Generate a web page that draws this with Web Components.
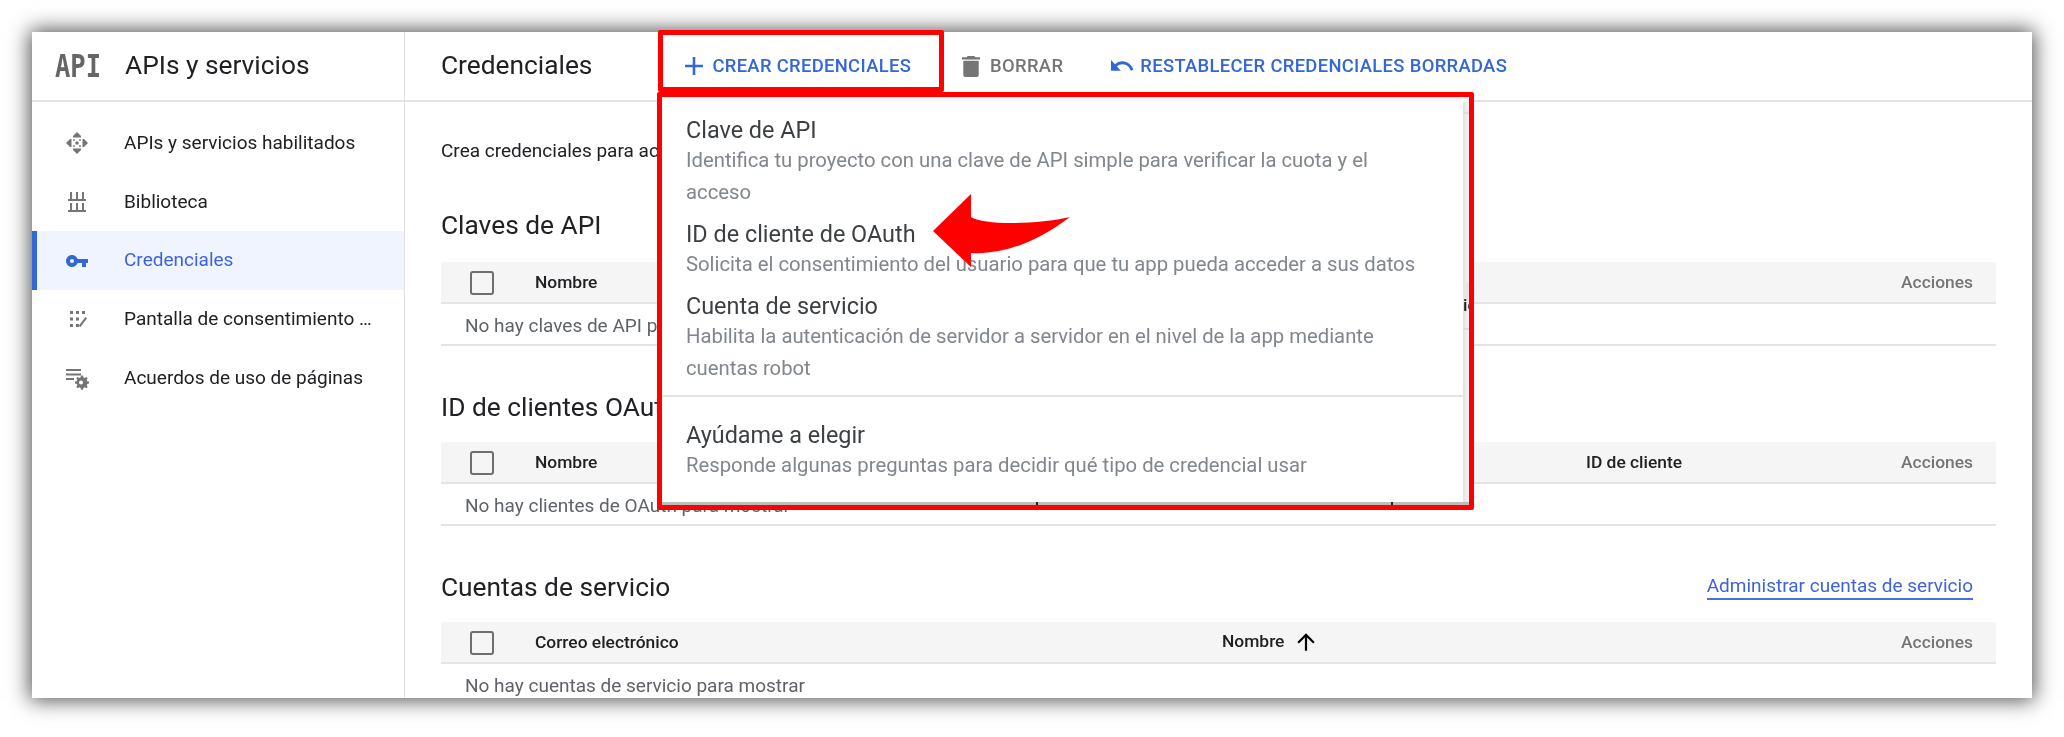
<!DOCTYPE html>
<html lang="es">
<head>
<meta charset="utf-8">
<title>Credenciales</title>
<style>
    html, body { margin: 0; background: white; }
    body {
        height: 737px;
        overflow: hidden;
        box-sizing: border-box;
        padding: 32px 32px 39px 32px;
        font-family: Roboto, "Liberation Sans", sans-serif;
        color: #202124;
    }
</style>
</head>
<body>
<gcp-window>
    <gcp-sidebar slot="sidebar" title-text="APIs y servicios">
        <nav-item label="APIs y servicios habilitados">
            <svg viewBox="0 0 24 24" width="24" height="24" fill="#757575"><path d="M12 1l4 4v1.500h-8V5zM12 23l-4-4v-1.500h8V19zM1 12l4-4h1.500v8H5zM23 12l-4 4h-1.500V8H19z"/><circle cx="12" cy="12" r="1.800"/><circle cx="9" cy="9" r=".9"/><circle cx="15" cy="9" r=".9"/><circle cx="9" cy="15" r=".9"/><circle cx="15" cy="15" r=".9"/></svg>
        </nav-item>
        <nav-item label="Biblioteca">
            <svg viewBox="0 0 24 24" width="24" height="24" fill="#757575"><path d="M5 2h2v7H5zM11 2h2v7h-2zM17 2h2v7h-2zM3 9h18v2H3zM5 13h2v7H5zM11 13h2v7h-2zM17 13h2v7h-2zM3 20h18v2H3z"/></svg>
        </nav-item>
        <nav-item label="Credenciales" active>
            <svg viewBox="0 0 24 24" width="24" height="24" fill="#3367d6"><path d="M12.650 10C11.830 7.670 9.610 6 7 6c-3.310 0-6 2.690-6 6s2.690 6 6 6c2.610 0 4.830-1.670 5.650-4H17v4h4v-4h2v-4H12.650zM7 14c-1.100 0-2-.9-2-2s.9-2 2-2 2 .9 2 2-.9 2-2 2z"/></svg>
        </nav-item>
        <nav-item label="Pantalla de consentimiento de OAuth">
            <svg viewBox="0 0 24 24" width="24" height="24" fill="#757575"><path d="M5 4h3v3H5zM11 4h3v3h-3zM17 4h3v3h-3zM5 10.500h3v3H5zM11 10.500h3v3h-3zM5 17h3v3H5zM11 17h3v3h-3zM20.500 10l1.500 1.200L15.500 20 13.800 18.800z"/></svg>
        </nav-item>
        <nav-item label="Acuerdos de uso de páginas">
            <svg viewBox="0 0 24 24" width="24" height="24" fill="#757575"><path d="M1 3h15v2H1zM1 7.500h15v2H1zM1 12h8v2H1z"/><path d="M17 9.500l1 0 .4 1.800 1.300.6 1.600-1 1.400 1.400-1 1.600.6 1.300 1.700.4v2l-1.700.4-.6 1.300 1 1.600-1.400 1.400-1.600-1-1.300.6-.4 1.800h-2l-.4-1.800-1.300-.6-1.600 1-1.400-1.400 1-1.600-.6-1.300-1.700-.4v-2l1.700-.4.6-1.300-1-1.600 1.400-1.400 1.600 1 1.300-.6.4-1.800zM16 14.500a2 2 0 1 0 0 4 2 2 0 0 0 0-4z"/></svg>
        </nav-item>
    </gcp-sidebar>

    <gcp-toolbar slot="toolbar" title-text="Credenciales">
        <tool-action style="margin-left: 93px; --gap: 9px">
            <svg slot="icon" viewBox="0 0 18 18" width="18" height="18" fill="#3367d6"><path d="M7.700 0h2.600v7.700H18v2.600h-7.700V18H7.700v-7.700H0V7.700h7.700z"/></svg>
            CREAR CREDENCIALES
        </tool-action>
        <tool-action muted style="margin-left: 51px; --gap: 10px">
            <svg slot="icon" viewBox="5 3 14 18" width="18" height="21" preserveAspectRatio="none" fill="#757575"><path d="M6 19c0 1.100.9 2 2 2h8c1.100 0 2-.9 2-2V7H6v12zM19 4h-3.500l-1-1h-5l-1 1H5v2h14V4z"/></svg>
            BORRAR
        </tool-action>
        <tool-action style="margin-left: 48px; --gap: 6px">
            <svg slot="icon" viewBox="2 7 21 10" width="23" height="12" preserveAspectRatio="none" fill="#3367d6"><path d="M12.500 8c-2.650 0-5.050.99-6.900 2.600L2 7v9h9l-3.620-3.620c1.390-1.160 3.160-1.880 5.120-1.880 3.540 0 6.550 2.310 7.600 5.500l2.370-.78C21.080 11.030 17.150 8 12.500 8z"/></svg>
            RESTABLECER CREDENCIALES BORRADAS
        </tool-action>
    </gcp-toolbar>

    <intro-text slot="content">Crea credenciales para acceder a tus API habilitadas</intro-text>

    <cred-section slot="content" style="--head-gap: 21px; --section-top: 46px" heading="Claves de API"
        columns="65px 1fr auto" empty="No hay claves de API para mostrar">
        <span slot="cols">Nombre</span>
        <span slot="cols" class="end">Acciones</span>
    </cred-section>

    <cred-section slot="content" heading="ID de clientes OAuth"
        columns="65px 1051px 1fr auto" empty="No hay clientes de OAuth para mostrar">
        <span slot="cols">Nombre</span>
        <span slot="cols">ID de cliente</span>
        <span slot="cols" class="end">Acciones</span>
    </cred-section>

    <cred-section slot="content" heading="Cuentas de servicio"
        columns="65px 687px 1fr auto" empty="No hay cuentas de servicio para mostrar">
        <a slot="link">Administrar cuentas de servicio</a>
        <span slot="cols">Correo electrónico</span>
        <span slot="cols">Nombre <svg viewBox="0 0 24 24" width="26" height="26" fill="#000" style="vertical-align: middle; margin-left: 4px"><path d="M4 12l1.410 1.410L11 7.830V20h2V7.830l5.580 5.590L20 12l-8-8-8 8z"/></svg></span>
        <span slot="cols" class="end">Acciones</span>
    </cred-section>

    <cred-menu slot="overlay">
        <menu-option heading="Clave de API">Identifica tu proyecto con una clave de API simple para verificar la cuota y el acceso</menu-option>
        <menu-option heading="ID de cliente de OAuth">Solicita el consentimiento del usuario para que tu app pueda acceder a sus datos</menu-option>
        <menu-option heading="Cuenta de servicio">Habilita la autenticación de servidor a servidor en el nivel de la app mediante cuentas robot</menu-option>
        <hr-line></hr-line>
        <menu-option heading="Ayúdame a elegir">Responde algunas preguntas para decidir qué tipo de credencial usar</menu-option>
    </cred-menu>

    <red-box slot="overlay" style="left: 626px; top: -2px; width: 276px; height: 52px"></red-box>
    <red-box slot="overlay" style="left: 625px; top: 60px; width: 807px; height: 408px"></red-box>
    <red-arrow slot="overlay" style="left: 901px; top: 162px"></red-arrow>
</gcp-window>

<script>
class GcpWindow extends HTMLElement {
    constructor() {
        super();
        this.attachShadow({mode: 'open'});
        this.shadowRoot.innerHTML = `
            <style>
                :host {
                    display: flex;
                    position: relative;
                    height: 666px;
                    background: white;
                    box-shadow: 0 0 20px 2px rgba(0, 0, 0, 0.7);
                    filter: blur(0.35px);
                }
                .clip { display: flex; flex: 1; min-width: 0; overflow: hidden; }
                .main { flex: 1; min-width: 0; display: flex; flex-direction: column; }
                .content { padding: 0 36px; }
            </style>
            <div class="clip">
                <slot name="sidebar"></slot>
                <div class="main">
                    <slot name="toolbar"></slot>
                    <div class="content"><slot name="content"></slot></div>
                </div>
            </div>
            <slot name="overlay"></slot>
        `;
    }
}

class GcpSidebar extends HTMLElement {
    constructor() {
        super();
        this.attachShadow({mode: 'open'});
        this.shadowRoot.innerHTML = `
            <style>
                :host {
                    display: block;
                    flex: none;
                    width: 372px;
                    border-right: 1px solid #e0e0e0;
                }
                header {
                    display: flex;
                    align-items: center;
                    height: 68px;
                    padding-left: 23px;
                    border-bottom: 2px solid #e4e4e4;
                }
                .logo {
                    display: inline-block;
                    width: 70px;
                    font: bold 25.500px "DejaVu Sans Mono", monospace;
                    color: #666;
                    transform: scaleY(1.25);
                }
                h1 {
                    margin: 0;
                    padding-bottom: 2px;
                    font-size: 26.300px;
                    font-weight: 400;
                    color: #202124;
                }
                nav { padding-top: 12px; }
            </style>
            <header><span class="logo">API</span><h1></h1></header>
            <nav><slot></slot></nav>
        `;
        this.shadowRoot.querySelector('h1').textContent = this.getAttribute('title-text');
    }
}

class NavItem extends HTMLElement {
    constructor() {
        super();
        this.attachShadow({mode: 'open'});
        this.shadowRoot.innerHTML = `
            <style>
                :host {
                    display: flex;
                    align-items: center;
                    gap: 35px;
                    height: 58.700px;
                    padding: 0 32px 0 33px;
                    font-size: 19px;
                    color: #202124;
                }
                :host([active]) {
                    background: #f0f4fe;
                    box-shadow: inset 5px 0 0 #3367d6;
                    color: #3f63dc;
                }
                .icon { display: flex; flex: none; }
                .label {
                    padding-bottom: 2px;
                    white-space: nowrap;
                    overflow: hidden;
                    text-overflow: ellipsis;
                }
            </style>
            <span class="icon"><slot></slot></span>
            <span class="label"></span>
        `;
        this.shadowRoot.querySelector('.label').textContent = this.getAttribute('label');
    }
}

class GcpToolbar extends HTMLElement {
    constructor() {
        super();
        this.attachShadow({mode: 'open'});
        this.shadowRoot.innerHTML = `
            <style>
                :host {
                    display: flex;
                    flex: none;
                    align-items: center;
                    height: 68px;
                    padding-left: 36px;
                    border-bottom: 2px solid #e4e4e4;
                }
                h2 {
                    margin: 0;
                    padding-bottom: 2px;
                    font-size: 26.300px;
                    font-weight: 400;
                    white-space: nowrap;
                }
            </style>
            <h2></h2>
            <slot></slot>
        `;
        this.shadowRoot.querySelector('h2').textContent = this.getAttribute('title-text');
    }
}

class ToolAction extends HTMLElement {
    constructor() {
        super();
        this.attachShadow({mode: 'open'});
        this.shadowRoot.innerHTML = `
            <style>
                :host {
                    display: flex;
                    align-items: center;
                    gap: var(--gap, 8px);
                    flex: none;
                    font-size: 18.400px;
                    letter-spacing: 0.33px;
                    font-weight: 500;
                    white-space: nowrap;
                    color: #3367d6;
                }
                :host([muted]) { color: #757575; }
                ::slotted(svg) { display: block; }
                span { padding-bottom: 2px; }
            </style>
            <slot name="icon"></slot>
            <span><slot></slot></span>
        `;
    }
}

class IntroText extends HTMLElement {
    constructor() {
        super();
        this.attachShadow({mode: 'open'});
        this.shadowRoot.innerHTML = `
            <style>
                :host {
                    display: block;
                    padding-top: 37px;
                    font-size: 19px;
                    line-height: 24px;
                    white-space: nowrap;
                }
            </style>
            <slot></slot>
        `;
    }
}

class CredSection extends HTMLElement {
    constructor() {
        super();
        this.attachShadow({mode: 'open'});
        this.shadowRoot.innerHTML = `
            <style>
                :host {
                    display: block;
                    margin-top: var(--section-top, 45px);
                }
                .top {
                    display: flex;
                    justify-content: space-between;
                    align-items: center;
                    height: 32px;
                    margin-bottom: var(--head-gap, 19px);
                    padding-right: 23px;
                }
                h3 { margin: 0; font-size: 26.300px; font-weight: 400; color: #202124; white-space: nowrap; }
                ::slotted(a) {
                    font-size: 19px;
                    line-height: 24px;
                    color: #3f63dc;
                    border-bottom: 2px solid #3f73e6;
                }
                .head {
                    display: grid;
                    align-items: center;
                    box-sizing: border-box;
                    height: 42px;
                    padding: 0 23px 0 29px;
                    background: #f5f5f5;
                    border-bottom: 2px solid #e4e4e4;
                    font-size: 17.400px;
                    font-weight: 500;
                    color: #202124;
                }
                .check {
                    box-sizing: border-box;
                    width: 24px;
                    height: 24px;
                    margin-top: 1px;
                    border: 2.500px solid #6e6e6e;
                    border-radius: 3px;
                }
                ::slotted(.end) { color: #757575; justify-self: end; }
                .empty {
                    box-sizing: border-box;
                    height: 42px;
                    padding-left: 24px;
                    line-height: 43px;
                    border-bottom: 2px solid #e4e4e4;
                    font-size: 19px;
                    color: #5f6368;
                    white-space: nowrap;
                }
            </style>
            <div class="top"><h3></h3><slot name="link"></slot></div>
            <div class="head"><span class="check"></span><slot name="cols"></slot></div>
            <div class="empty"></div>
        `;
        this.shadowRoot.querySelector('h3').textContent = this.getAttribute('heading');
        this.shadowRoot.querySelector('.head').style.gridTemplateColumns = this.getAttribute('columns');
        this.shadowRoot.querySelector('.empty').textContent = this.getAttribute('empty');
    }
}

class CredMenu extends HTMLElement {
    constructor() {
        super();
        this.attachShadow({mode: 'open'});
        this.shadowRoot.innerHTML = `
            <style>
                :host {
                    position: absolute;
                    left: 630px;
                    top: 65px;
                    display: grid;
                    grid-template-columns: 801px 7px;
                    grid-template-rows: 5px 400px 3px;
                    width: 808px;
                }
                .lip { grid-column: 1 / 3; background: #f9f9f9; }
                .list {
                    background: white;
                    padding: 14px 0 0 24px;
                    display: flex;
                    flex-direction: column;
                    gap: 12px;
                    overflow: hidden;
                }
                .strip {
                    background: linear-gradient(to right, #e2e2e2, #f6f6f6);
                    overflow: hidden;
                    font-size: 17.400px;
                    font-weight: 500;
                    line-height: 18px;
                }
                .strip i { display: block; height: 2px; margin-top: 10px; background: #dcdcdc; }
                .strip b {
                    display: block;
                    height: 20px;
                    margin-top: 169px;
                    background: #e6e6e6;
                }
                .strip span { display: block; margin-top: -7px; color: #202124; white-space: nowrap; }
                .strip span + i { margin-top: 14px; }
                .foot {
                    grid-column: 1 / 3;
                    background:
                        linear-gradient(#222, #222) 374px 0 / 2px 100% no-repeat,
                        linear-gradient(#222, #222) 729px 0 / 2px 100% no-repeat,
                        #bdbdbd;
                }
            </style>
            <div class="lip"></div>
            <div class="list"><slot></slot></div>
            <div class="strip"><i></i><b></b><span>ic</span><i></i></div>
            <div class="foot"></div>
        `;
    }
}

class MenuOption extends HTMLElement {
    constructor() {
        super();
        this.attachShadow({mode: 'open'});
        this.shadowRoot.innerHTML = `
            <style>
                :host { display: block; width: 738px; }
                .name { font-size: 23.400px; line-height: 28px; color: #3c4043; }
                .desc { font-size: 20.300px; line-height: 32px; color: #80868b; }
            </style>
            <div class="name"></div>
            <div class="desc"><slot></slot></div>
        `;
        this.shadowRoot.querySelector('.name').textContent = this.getAttribute('heading');
    }
}

class HrLine extends HTMLElement {
    constructor() {
        super();
        this.attachShadow({mode: 'open'});
        this.shadowRoot.innerHTML = `
            <style>
                :host {
                    display: block;
                    height: 2px;
                    margin: -1px 0 12px -24px;
                    background: #e4e4e4;
                }
            </style>
        `;
    }
}

class RedBox extends HTMLElement {
    constructor() {
        super();
        this.attachShadow({mode: 'open'});
        this.shadowRoot.innerHTML = `
            <style>
                :host {
                    position: absolute;
                    border: 5px solid #ff0000;
                    border-radius: 2px;
                    pointer-events: none;
                }
            </style>
        `;
    }
}

class RedArrow extends HTMLElement {
    constructor() {
        super();
        this.attachShadow({mode: 'open'});
        this.shadowRoot.innerHTML = `
            <style>
                :host { position: absolute; display: block; width: 138px; height: 74px; }
                svg { display: block; }
            </style>
            <svg viewBox="933 194 138 74" width="138" height="74" fill="#ff0000">
                <path d="M933 231 L971 194 V217 C985 226 1040 224 1070 217 C1040 240 1005 255 971 253 V267 Z"/>
            </svg>
        `;
    }
}

window.customElements.define('gcp-window', GcpWindow);
window.customElements.define('gcp-sidebar', GcpSidebar);
window.customElements.define('nav-item', NavItem);
window.customElements.define('gcp-toolbar', GcpToolbar);
window.customElements.define('tool-action', ToolAction);
window.customElements.define('intro-text', IntroText);
window.customElements.define('cred-section', CredSection);
window.customElements.define('cred-menu', CredMenu);
window.customElements.define('menu-option', MenuOption);
window.customElements.define('hr-line', HrLine);
window.customElements.define('red-box', RedBox);
window.customElements.define('red-arrow', RedArrow);
</script>
</body>
</html>
